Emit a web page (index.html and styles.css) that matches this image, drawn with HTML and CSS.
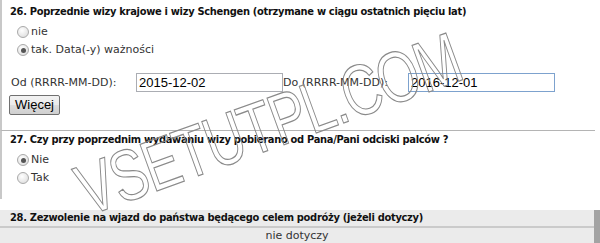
FILE: index.html
```html
<!DOCTYPE html>
<html>
<head>
<meta http-equiv="Content-Type" content="text/html; charset=utf-8"/>
<title>Wniosek wizowy</title>
<link rel="stylesheet" href="styles.css">
</head>
<body>

<div class="form">

<div class="field first">
<h3 class="q">26. Poprzednie wizy krajowe i wizy Schengen (otrzymane w ciągu ostatnich pięciu lat)</h3>
<div class="opt"><span class="radio"></span><span class="opt-text">nie</span></div>
<div class="opt"><span class="radio on"></span><span class="opt-text">tak. Data(-y) ważności</span></div>
<div class="dates">
  <span class="lbl">Od (RRRR-MM-DD):</span>
  <span class="txt">2015-12-02</span>
  <span class="lbl">Do (RRRR-MM-DD):</span>
  <span class="txt focus">2016-12-01</span>
</div>
<span class="btn">Więcej</span>
</div>

<div class="field">
<h3 class="q">27. Czy przy poprzednim wydawaniu wizy pobierano od Pana/Pani odciski palców ?</h3>
<div class="opt"><span class="radio on"></span><span class="opt-text">Nie</span></div>
<div class="opt"><span class="radio"></span><span class="opt-text">Tak</span></div>
</div>

<div class="grid">
  <div class="grid-head">28. Zezwolenie na wjazd do państwa będącego celem podróży (jeżeli dotyczy)</div>
  <div class="grid-row">nie dotyczy</div>
</div>

</div>

<svg class="mark" width="600" height="243" viewBox="0 0 600 243">
  <text x="0" y="0" transform="translate(88 216) rotate(-20) scale(0.75 1)">VSETUTPL.COM</text>
</svg>

</body>
</html>
```

FILE: styles.css
```css
body {
  margin: 0;
  background-color: white;
  font-family: "DejaVu Sans", Verdana, sans-serif;
  font-size: 11px;
  color: #333;
}

.form {
  width: 600px;
}

.field {
  border-left: 2px solid #c8c8c8;
  padding: 5px 0 0 8px;
  margin-right: 5px;
}

.field.first {
  border-bottom: 1px solid #b4b4b4;
  padding-bottom: 15px;
}

.q, .grid-head {
  margin: 0;
  font-family: "DejaVu Sans Condensed", "DejaVu Sans", Verdana, sans-serif;
  font-stretch: condensed;
  font-size: 11px;
  letter-spacing: -0.3px;
  line-height: 14px;
  color: #111;
  font-weight: bold;
}

.opt {
  display: flex;
  align-items: center;
  height: 18px;
  margin-left: 7px;
}

.field .q + .opt {
  margin-top: 4px;
}

.radio {
  width: 12px;
  height: 12px;
  border-radius: 50%;
  border: 1px solid #a9a9a9;
  background: radial-gradient(circle at 40% 35%, #ffffff, #d8d8d8);
  box-sizing: border-box;
  margin-right: 2px;
  position: relative;
}

.radio.on::after {
  content: "";
  position: absolute;
  left: 2.5px;
  top: 2.5px;
  width: 5px;
  height: 5px;
  border-radius: 50%;
  background: #555;
}

.opt-text {
  line-height: 14px;
}

.dates {
  display: flex;
  align-items: center;
  margin-top: 14px;
  margin-left: 1px;
}

.lbl {
  width: 125px;
}

.txt {
  width: 147px;
  height: 19px;
  box-sizing: border-box;
  border: 1px solid #abadb3;
  padding: 0 2px;
  font-family: "Liberation Sans", Arial, sans-serif;
  font-size: 13px;
  line-height: 17px;
  color: #000;
}

.txt.focus {
  border-color: #7da2ce;
}

.btn {
  display: inline-block;
  margin: 3px 0 0 -1px;
  height: 20px;
  padding: 0 5px;
  box-sizing: border-box;
  border: 1px solid #707070;
  border-radius: 2px;
  background: linear-gradient(#f2f2f2, #ebebeb 50%, #dddddd 51%, #cfcfcf);
  font-family: "Liberation Sans", Arial, sans-serif;
  font-size: 13px;
  line-height: 18px;
  color: #000;
}

.field + .field {
  padding-top: 2px;
  padding-bottom: 12px;
}

.grid {
  margin-top: 11px;
  border-right: 6px solid #a3a3a3;
}

.grid-head {
  background: #ebebeb;
  border-bottom: 2px solid #cacaca;
  padding: 1px 0 0 10px;
  height: 15px;
}

.grid-row {
  background: #ebebeb;
  border-bottom: 2px solid #cacaca;
  height: 15px;
  line-height: 15px;
  text-align: center;
}

.mark {
  position: absolute;
  left: 0;
  top: 0;
  pointer-events: none;
}

.mark text {
  font-family: "Liberation Sans", Arial, sans-serif;
  font-size: 72px;
  fill: none;
  stroke: #8a8a8a;
  stroke-width: 1.2;
  letter-spacing: -2px;
}
```
